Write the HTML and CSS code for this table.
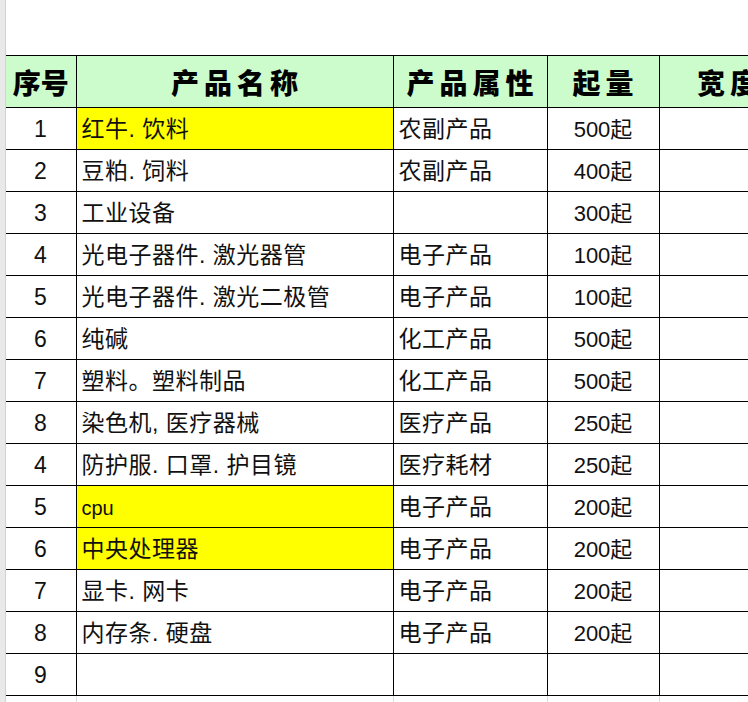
FILE: index.html
```html
<!DOCTYPE html>
<html lang="zh">
<head>
<meta charset="utf-8">
<link rel="stylesheet" href="styles.css">
</head>
<body>
<div class="sheet">
  <div class="rowhead"></div>
  <div class="area">
    <table class="grid">
      <colgroup>
        <col class="c1"><col class="c2"><col class="c3"><col class="c4"><col class="c5">
      </colgroup>
      <thead>
        <tr class="head">
          <th class="h1">序号</th>
          <th class="h2">产品名称</th>
          <th class="h3">产品属性</th>
          <th class="h4">起量</th>
          <th class="h5">宽度</th>
        </tr>
      </thead>
      <tbody>
        <tr><td class="num">1</td><td class="name yellow">红牛. 饮料</td><td class="attr">农副产品</td><td class="qty">500起</td><td></td></tr>
        <tr><td class="num">2</td><td class="name">豆粕. 饲料</td><td class="attr">农副产品</td><td class="qty">400起</td><td></td></tr>
        <tr><td class="num">3</td><td class="name">工业设备</td><td class="attr"></td><td class="qty">300起</td><td></td></tr>
        <tr><td class="num">4</td><td class="name">光电子器件. 激光器管</td><td class="attr">电子产品</td><td class="qty">100起</td><td></td></tr>
        <tr><td class="num">5</td><td class="name">光电子器件. 激光二极管</td><td class="attr">电子产品</td><td class="qty">100起</td><td></td></tr>
        <tr><td class="num">6</td><td class="name">纯碱</td><td class="attr">化工产品</td><td class="qty">500起</td><td></td></tr>
        <tr><td class="num">7</td><td class="name">塑料。塑料制品</td><td class="attr">化工产品</td><td class="qty">500起</td><td></td></tr>
        <tr><td class="num">8</td><td class="name">染色机, 医疗器械</td><td class="attr">医疗产品</td><td class="qty">250起</td><td></td></tr>
        <tr><td class="num">4</td><td class="name">防护服. 口罩. 护目镜</td><td class="attr">医疗耗材</td><td class="qty">250起</td><td></td></tr>
        <tr><td class="num">5</td><td class="name yellow latin">cpu</td><td class="attr">电子产品</td><td class="qty">200起</td><td></td></tr>
        <tr><td class="num">6</td><td class="name yellow">中央处理器</td><td class="attr">电子产品</td><td class="qty">200起</td><td></td></tr>
        <tr><td class="num">7</td><td class="name">显卡. 网卡</td><td class="attr">电子产品</td><td class="qty">200起</td><td></td></tr>
        <tr><td class="num">8</td><td class="name">内存条. 硬盘</td><td class="attr">电子产品</td><td class="qty">200起</td><td></td></tr>
        <tr><td class="num">9</td><td class="name"></td><td class="attr"></td><td class="qty"></td><td></td></tr>
        <tr class="empty"><td></td><td></td><td></td><td></td><td></td></tr>
      </tbody>
    </table>
  </div>
</div>
</body>
</html>
```
FILE: styles.css
```css
html, body {
  margin: 0;
  padding: 0;
  background: #ffffff;
  overflow: hidden;
}
body {
  width: 748px;
  height: 702px;
  font-family: "Liberation Sans", "Noto Sans CJK SC", sans-serif;
  color: #111;
}
.sheet {
  display: flex;
  height: 702px;
}
.rowhead {
  width: 5px;
  flex: none;
  background: #e9e9e9;
  border-right: 1px solid #d2d2d2;
}
.area {
  padding-top: 55px;
  flex: none;
}
.grid {
  border-collapse: collapse;
  table-layout: fixed;
  width: 790px;
}
.c1 { width: 70px; }
.c2 { width: 317px; }
.c3 { width: 154px; }
.c4 { width: 112px; }
.c5 { width: 137px; }
.grid th, .grid td {
  border: 1px solid #000;
  padding: 0;
  white-space: nowrap;
  overflow: hidden;
}
.grid td:first-child, .grid th:first-child {
  border-left: none;
}
.head th {
  height: 51px;
  background: #ccfccc;
  font-family: "Noto Sans CJK SC", sans-serif;
  font-weight: 900;
  font-size: 28px;
  letter-spacing: 5px;
  text-indent: 5px;
  color: #000;
  text-align: center;
  line-height: 1;
}
.head .h1 { letter-spacing: 0; text-indent: 0; }
.grid td {
  height: 39px;
  font-size: 23px;
  line-height: 1;
  letter-spacing: 0.5px;
  padding-top: 2px;
}
.num { text-align: center; }
.grid td.name, .grid td.attr { padding-left: 5px; text-align: left; }
.grid td.qty { text-align: center; letter-spacing: 0; font-size: 22px; }
.yellow { background: #ffff00; }
.grid td.latin { font-size: 20px; letter-spacing: 0; }
.empty td {
  border-top: 1px solid #000;
  border-left: 1px solid #dcdcdc;
  border-right: 1px solid #dcdcdc;
  border-bottom: none;
}
```
